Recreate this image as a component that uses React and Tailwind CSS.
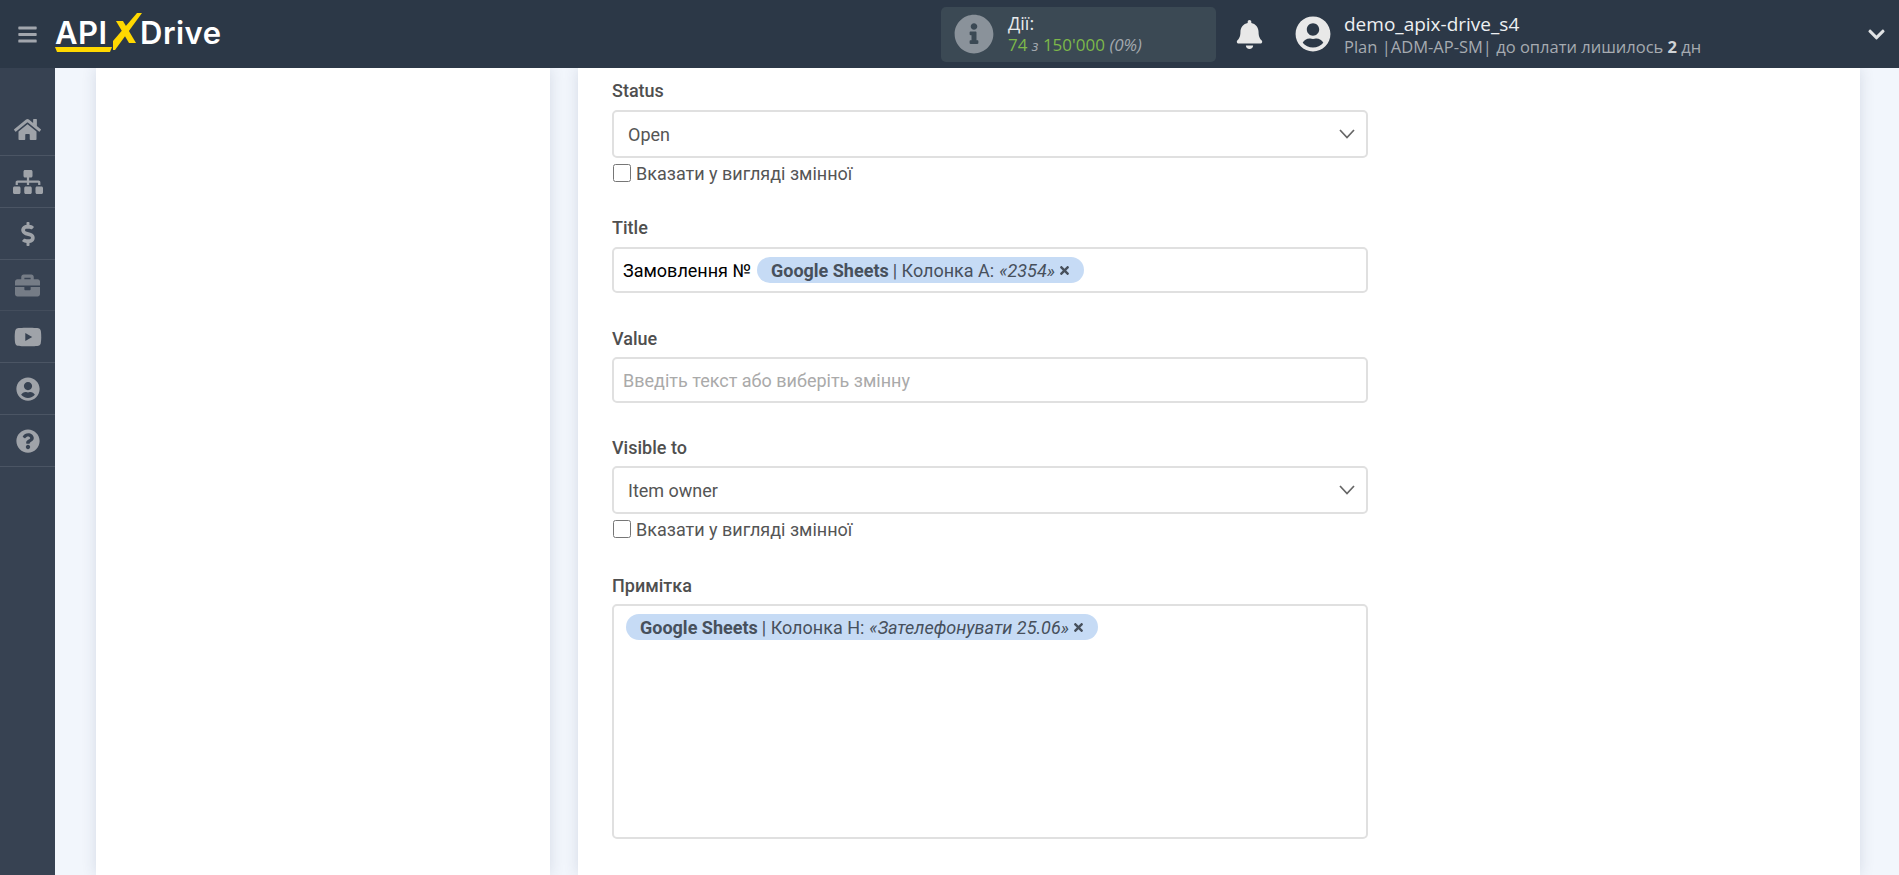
import React from "react";
import {
  FaBars, FaHome, FaSitemap, FaDollarSign, FaBriefcase, FaYoutube,
  FaUserCircle, FaQuestionCircle, FaBell, FaInfoCircle, FaChevronDown, FaTimes,
} from "react-icons/fa";

const navItems = [
  { Icon: FaHome, size: 27, cls: "h-[52px]" },
  { Icon: FaSitemap, size: 30, cls: "h-[52px]" },
  { Icon: FaDollarSign, size: 24, cls: "h-[52px]" },
  { Icon: FaBriefcase, size: 25, cls: "h-[51px] opacity-60" },
  { Icon: FaYoutube, size: 28, cls: "h-[52px]" },
  { Icon: FaUserCircle, size: 24, cls: "h-[52px]" },
  { Icon: FaQuestionCircle, size: 24, cls: "h-[52px]" },
];

function Logo() {
  return (
    <div className="relative ml-[17px] w-[170px] h-[50px] font-['Inter',sans-serif] font-semibold text-white text-[31px] leading-none tracking-[0.5px]">
      <span className="absolute left-0 top-[8px]">API</span>
      <span className="absolute left-[85px] top-[8px]">Drive</span>
      <svg className="absolute left-0 top-0" width="120" height="50" viewBox="0 0 120 50" fill="none">
        <polygon points="82,4 87,4 60,41 58,41 58,32" fill="#ffd800" />
        <polygon points="61,12 68,12 81,34 74,34" fill="#ffd800" />
        <polygon points="0,38 57,38 55,43 2,43" fill="#ffd800" />
      </svg>
    </div>
  );
}

function Label({ children }) {
  return <div className="text-[18px] leading-[20px] font-medium text-[#4f4f4f]">{children}</div>;
}

function Select({ value, mt }) {
  return (
    <div className={`${mt} h-[48px] border-2 border-[#e0e0e0] rounded-[5px] bg-white flex items-center justify-between pl-[14px] pr-[11px] text-[18px] text-[#555]`}>
      <span>{value}</span>
      <svg width="16" height="10" viewBox="0 0 16 10" fill="none" stroke="#666" strokeWidth="1.7">
        <polyline points="1,1 8,8.5 15,1" />
      </svg>
    </div>
  );
}

function VarCheck() {
  return (
    <label className="mt-[4px] flex items-center h-[22px] text-[18px] text-[#555]">
      <input type="checkbox" className="w-[18px] h-[18px] m-0 ml-[1px] mr-[5px]" />
      Вказати у вигляді змінної
    </label>
  );
}

function Chip({ column, value }) {
  return (
    <span className="inline-flex items-center h-[26px] rounded-[13px] bg-[#c6dbf5] pl-[14px] pr-[13px] text-[18px] text-[#47505c] whitespace-nowrap">
      <b className="font-bold">Google Sheets</b>
      <span className="ml-[4px]">| Колонка {column}:</span>
      <i className="ml-[5px]">«{value}»</i>
      <FaTimes size={13} className="ml-[3px]" />
    </span>
  );
}

export default function App() {
  return (
    <div className="h-screen flex flex-col overflow-hidden bg-[#f2f6fc] font-['Roboto',sans-serif]">
      <header className="relative z-10 h-[68px] shrink-0 bg-[#2c3847] flex items-center">
        <FaBars size={21} className="ml-[17px] text-[#a2a6ad]" />
        <Logo />
        <div className="ml-[716px] w-[275px] h-[55px] rounded-[5px] bg-[#3b4954] flex items-center pl-[13px] font-['Open_Sans',sans-serif]">
          <FaInfoCircle size={40} className="text-[#8a929a]" />
          <div className="ml-[14px]">
            <div className="text-[18px] leading-[22px] text-[#e8eaec]">Дії:</div>
            <div className="text-[17px] leading-[22px] text-[#7db84a]">
              74 <i className="text-[#a2a8ae] text-[15px]">з</i> 150'000 <i className="text-[#a2a8ae]">(0%)</i>
            </div>
          </div>
        </div>
        <FaBell size={29} className="ml-[19px] text-[#e8e8e8]" />
        <FaUserCircle size={36} className="ml-[31px] text-[#e8e8e8]" />
        <div className="ml-[13px] mt-[3px] font-['Open_Sans',sans-serif]">
          <div className="text-[19px] leading-[23px] text-[#eef0f2]">demo_apix-drive_s4</div>
          <div className="text-[16.5px] leading-[22px] text-[#a6abb1]">
            Plan |ADM-AP-SM| до оплати лишилось <b className="text-[#d0d3d6]">2</b> дн
          </div>
        </div>
        <FaChevronDown size={19} className="ml-auto mr-[13px] text-[#e0e2e4]" />
      </header>

      <div className="flex-1 flex min-h-0">
        <nav className="w-[55px] shrink-0 bg-[#374252] pt-[36px] relative z-10">
          {navItems.map(({ Icon, size, cls }, i) => (
            <div key={i} className={`${cls} flex items-center justify-center border-b border-[#4b5564] text-[#9fa3a9]`}>
              <Icon size={size} />
            </div>
          ))}
        </nav>
        <main className="flex-1 flex min-w-0">
          <aside className="ml-[41px] w-[454px] bg-white shadow-[0_0_14px_rgba(40,60,90,0.14)]" />
          <section className="ml-[28px] w-[1282px] bg-white shadow-[0_0_14px_rgba(40,60,90,0.14)] pl-[34px] pt-[13px]">
            <div className="w-[756px]">
              <Label>Status</Label>
              <Select value="Open" mt="mt-[9px]" />
              <VarCheck />

              <div className="mt-[34px]"><Label>Title</Label></div>
              <div className="mt-[9px] h-[46px] border-2 border-[#e0e0e0] rounded-[5px] flex items-center pl-[9px] text-[18px] text-black">
                <span className="mr-[6px]">Замовлення №</span>
                <Chip column="A" value="2354" />
              </div>

              <div className="mt-[36px]"><Label>Value</Label></div>
              <div className="mt-[8px] h-[46px] border-2 border-[#e0e0e0] rounded-[5px] flex items-center pl-[9px] text-[18px] text-[#aaa]">
                Введіть текст або виберіть змінну
              </div>

              <div className="mt-[35px]"><Label>Visible to</Label></div>
              <Select value="Item owner" mt="mt-[8px]" />
              <VarCheck />

              <div className="mt-[36px]"><Label>Примітка</Label></div>
              <div className="mt-[8px] h-[235px] border-2 border-[#e0e0e0] rounded-[5px] pl-[12px] pt-[8px]">
                <Chip column="H" value="Зателефонувати 25.06" />
              </div>
            </div>
          </section>
        </main>
      </div>
    </div>
  );
}
